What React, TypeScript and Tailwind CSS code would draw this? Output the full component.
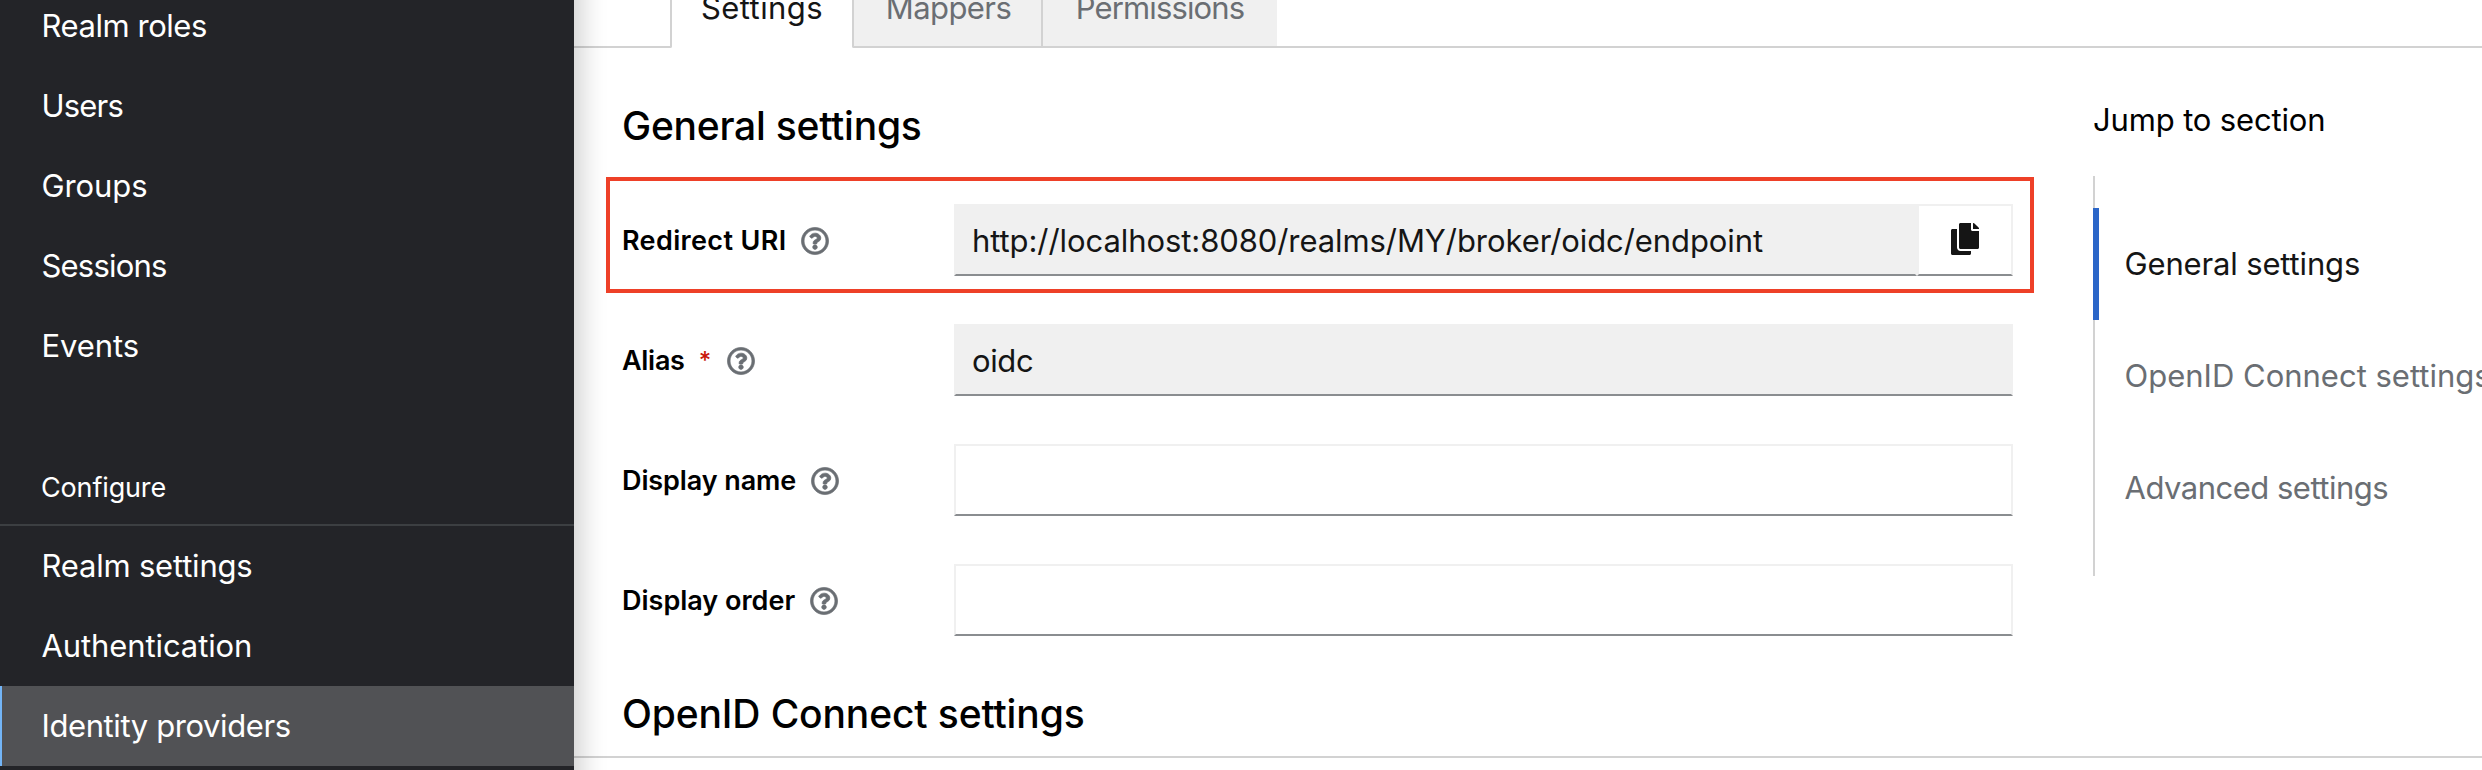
import type { ReactNode } from "react";
import { FaCopy, FaRegQuestionCircle } from "react-icons/fa";

function NavItem({ label, track = "", active = false }: { label: string; track?: string; active?: boolean }) {
  return (
    <a
      className={`flex h-20 shrink-0 items-center border-l-2 pl-[39.5px] text-[31px] leading-10 whitespace-nowrap text-white ${
        active ? "border-[#73b5f7] bg-[#515255]" : "border-transparent"
      }`}
    >
      <span className={track}>{label}</span>
    </a>
  );
}

function FormLabel({ label, track = "", required = false }: { label: string; track?: string; required?: boolean }) {
  return (
    <div className="flex w-[332px] shrink-0 items-center pt-0.5 text-[27px] leading-10 font-semibold whitespace-nowrap text-black">
      <span className={track}>{label}</span>
      {required && <span className="ml-3.5 w-[13px] text-[24px] leading-10 font-medium text-[#c9190b]">*</span>}
      <FaRegQuestionCircle className="ml-[15px] size-7 overflow-visible stroke-[#6a6e73] text-[#6a6e73] [stroke-width:12px]" />
    </div>
  );
}

function Field({ value = "", track = "", disabled = false }: { value?: string; track?: string; disabled?: boolean }) {
  return (
    <div
      className={`flex h-[72px] flex-1 items-center border-2 border-[#f0f0f0] border-b-[#8a8d90] pt-0.5 pl-4 text-[31px] leading-10 whitespace-nowrap text-[#151515] ${
        disabled ? "bg-[#f0f0f0]" : "bg-white"
      }`}
    >
      <span className={track}>{value}</span>
    </div>
  );
}

function FormRow({ children }: { children: ReactNode }) {
  return <div className="flex h-[72px] items-center">{children}</div>;
}

function JumpLink({ label, track = "", active = false }: { label: string; track?: string; active?: boolean }) {
  return (
    <a
      className={`-ml-0.5 flex h-28 items-center border-l-[6px] pl-[25.5px] text-[31px] leading-10 whitespace-nowrap ${
        active ? "border-[#2b66c8] text-[#151515]" : "border-transparent text-[#6a6e73]"
      }`}
    >
      <span className={track}>{label}</span>
    </a>
  );
}

export default function App() {
  return (
    <div className="flex h-[770px] w-[2482px] overflow-hidden bg-white font-['Inter',sans-serif]">
      <aside className="z-10 -my-12 flex w-[574px] shrink-0 flex-col bg-[#232428] pt-12 shadow-[24px_0_24px_-16px_rgba(3,3,3,0.18)]">
        <nav className="-mt-3.5 flex flex-col">
          <NavItem label="Realm roles" track="tracking-[-0.45px]" />
          <NavItem label="Users" track="tracking-[-0.8px]" />
          <NavItem label="Groups" track="tracking-[-0.1px]" />
          <NavItem label="Sessions" track="tracking-[-0.8px]" />
          <NavItem label="Events" track="tracking-[-0.1px]" />
        </nav>
        <h2 className="flex h-[140px] shrink-0 items-end border-b-2 border-[#3c3f42] pb-[15px] pl-[41px] text-[27px] leading-[42px] tracking-[-0.15px] text-white">
          Configure
        </h2>
        <nav className="flex flex-col">
          <NavItem label="Realm settings" track="tracking-[-0.2px]" />
          <NavItem label="Authentication" track="tracking-[-0.1px]" />
          <NavItem label="Identity providers" track="tracking-[-0.4px]" active />
        </nav>
      </aside>

      <main className="flex min-w-0 flex-1 flex-col">
        <div className="flex h-12 shrink-0 text-[31px] leading-8 whitespace-nowrap">
          <div className="w-[98px] rounded-br-[2px] border-r-2 border-b-2 border-[#d2d2d2]" />
          <div className="flex w-[180px] items-end justify-center pb-6 text-[#151515]">
            <span className="tracking-[0.4px]">Settings</span>
          </div>
          <div className="flex w-[191px] items-end justify-center rounded-bl-[2px] border-x-2 border-b-2 border-[#d2d2d2] bg-[#f0f0f0] pb-[22px] pl-0.5 text-[#6a6e73]">
            <span className="tracking-[-0.6px]">Mappers</span>
          </div>
          <div className="flex w-[234px] items-end justify-center border-b-2 border-[#d2d2d2] bg-[#f0f0f0] pb-[22px] text-[#6a6e73]">
            <span className="tracking-[-0.85px]">Permissions</span>
          </div>
          <div className="flex-1 border-b-2 border-[#d2d2d2]" />
        </div>

        <div className="flex h-[588px] shrink-0">
          <section className="w-[1460px] shrink-0 pl-8">
            <h1 className="flex h-[129px] items-end pb-[27px] pl-4 text-[39px] leading-[48px] font-medium tracking-[-0.25px] text-black">
              General settings
            </h1>
            <div className="h-[116px] border-4 border-[#ee4028] pt-[23px] pr-[17px] pl-3">
              <FormRow>
                <FormLabel label="Redirect URI" track="tracking-[0.35px]" />
                <Field value="http://localhost:8080/realms/MY/broker/oidc/endpoint" track="tracking-[-0.08px]" disabled />
                <button className="flex h-[72px] w-24 items-center justify-center border-2 border-[#f0f0f0] border-b-[#8a8d90] bg-white pb-0.5 text-[#151515]">
                  <FaCopy className="h-8 w-7" />
                </button>
              </FormRow>
            </div>
            <div className="mt-[31px] flex flex-col gap-12 pr-[21px] pl-4">
              <FormRow>
                <FormLabel label="Alias" track="tracking-[-0.3px]" required />
                <Field value="oidc" track="tracking-[-0.4px]" disabled />
              </FormRow>
              <FormRow>
                <FormLabel label="Display name" track="tracking-[-0.1px]" />
                <Field />
              </FormRow>
              <FormRow>
                <FormLabel label="Display order" />
                <Field />
              </FormRow>
            </div>
          </section>

          <aside className="ml-[59px] flex-1 pt-[51px]">
            <h2 className="text-[31px] leading-[42px] tracking-[-0.15px] whitespace-nowrap text-black">Jump to section</h2>
            <nav className="mt-[35px] h-[400px] border-l-2 border-[#d2d2d2] pt-8">
              <JumpLink label="General settings" track="tracking-[-0.15px]" active />
              <JumpLink label="OpenID Connect settings" />
              <JumpLink label="Advanced settings" track="tracking-[-0.5px]" />
            </nav>
          </aside>
        </div>

        <h1 className="flex h-[122px] shrink-0 items-end border-b-2 border-[#d2d2d2] pb-[18px] pl-12 text-[39px] leading-[48px] font-medium tracking-[-0.13px] text-black">
          OpenID Connect settings
        </h1>
      </main>
    </div>
  );
}
